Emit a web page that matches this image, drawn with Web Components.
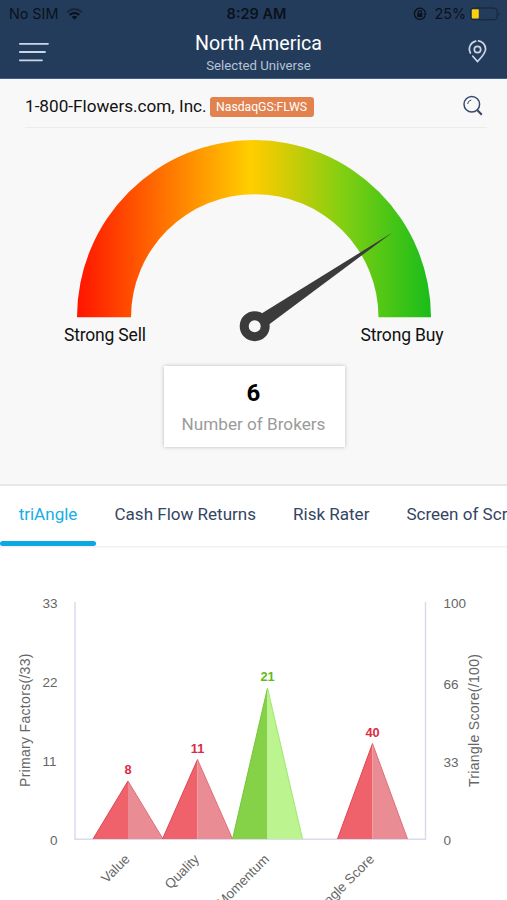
<!DOCTYPE html>
<html lang="en">
<head>
<meta charset="utf-8">
<title>North America</title>
<style>
html,body{margin:0;height:900px;overflow:hidden;background:#fff}
body{font-family:Roboto,"Liberation Sans",sans-serif}
</style>
</head>
<body>
<broker-app></broker-app>
<script>
const define = (name, html) => {
  const t = document.createElement('template');
  t.innerHTML = html;
  customElements.define(name, class extends HTMLElement {
    constructor() {
      super();
      this.attachShadow({mode: 'open'}).append(t.content.cloneNode(true));
    }
  });
};

define('status-bar', `<style>
:host{display:grid;grid-template-columns:1fr auto 1fr;align-items:center;height:27px;padding:0 6px 0 9px;box-sizing:border-box;background:#243c5b;color:#0b111b;font:14.300px/27px Inter,sans-serif}
.l,.r{display:flex;align-items:center}.r{justify-content:flex-end}
.l svg{margin-left:8px}.r span{margin:0 4px 0 8px}b{font-weight:600;font-size:14.500px;padding-left:3px}
svg{display:block}
</style>
<div class="l"><span>No SIM</span>
<svg width="17" height="12" viewBox="0 0 17 12" fill="none" stroke="#0b111b" stroke-width="2"><path d="M1 4.200Q8.500-2 16 4.200" opacity=".5"/><path d="M3.700 6.900Q8.500 3 13.300 6.900"/><path d="M5.700 8.800Q8.500 6.500 11.300 8.800L8.500 11.700Z" fill="#0b111b" stroke="none"/></svg></div>
<b>8:29 AM</b>
<div class="r"><svg width="14" height="14" viewBox="0 0 14 14" fill="none" stroke="#0b111b" stroke-width="1.300"><path d="M12.300 8.500A5.600 5.600 0 1 1 12.400 5.500"/><path d="M10.300 6.200h3.600l-1.800 2.600z" fill="#0b111b" stroke="none"/><rect x="4.300" y="6.300" width="5" height="3.700" fill="#0b111b" stroke="none"/><path d="M5.200 6.500V5.200a1.600 1.600 0 0 1 3.200 0v1.300"/></svg>
<span>25%</span>
<svg width="31" height="14" viewBox="0 0 31 14"><rect x=".7" y="1" width="26.500" height="11.800" rx="3" fill="none" stroke="#172334"/><rect x="1.800" y="2.300" width="7" height="9.300" rx="1" fill="#fbd00f"/><path d="M28.700 4.900q2.200 2 0 4z" fill="#172334"/></svg></div>`);

define('nav-bar', `<style>
:host{display:grid;grid-template-columns:60px 1fr 60px;height:52px;background:#243c5b;color:#fff;box-sizing:border-box;border-bottom:1px solid #3f5f86}
svg{display:block}
.t{text-align:center;padding:4px 0 0 10px}
h1{font-weight:400;font-size:19.600px;line-height:25px;margin:0;white-space:nowrap}
p{margin:0;font-size:13.200px;line-height:20px;color:#b5c3d6}
.m{padding:15px 0 0 18.500px}.p{padding:13px 0 0 20px}
</style>
<div class="m"><svg width="30" height="20" fill="none" stroke="#cbd7e6" stroke-width="1.800" stroke-linecap="round"><path d="M.8 1.800H29M.8 10H26M.8 18.300H23"/></svg></div>
<div class="t"><h1><slot name="title"></slot></h1><p><slot></slot></p></div>
<div class="p"><svg width="22" height="24" viewBox="0 0 22 24" fill="none" stroke="#cbd7e6" stroke-width="1.700" stroke-linecap="round"><path d="M5.800 16.200L10.500 21.600C14 17.800 18.600 13.300 18.600 9A8.200 8.200 0 0 0 11.500 .9M8.700 1.100A8.200 8.200 0 0 0 3.400 13"/><circle cx="10.500" cy="9.500" r="3.200"/></svg></div>`);

define('company-row', `<style>
:host{display:flex;align-items:center;height:49px;margin:0 20px 0 25px;padding-top:6px;box-sizing:border-box;border-bottom:1px solid #ececec;color:#111}
.n{font-size:17.150px;white-space:nowrap}
.b{margin:2px 0 0 3px;height:20px;line-height:21px;width:104px;text-align:center;background:#e1824f;color:#fff;border-radius:3px;font-size:12.200px}
svg{margin-left:auto;margin-right:3px}
</style>
<span class="n"><slot></slot></span><span class="b"><slot name="ticker"></slot></span>
<svg width="22" height="22" viewBox="0 0 22 22" fill="none" stroke="#394a6a" stroke-width="1.500"><circle cx="9.800" cy="9.300" r="7.800"/><path d="M5.600 9A4.500 4.500 0 0 1 9.300 5" stroke-width="1"/><path d="M15.400 15.200L19.800 19.700" stroke-width="2.200"/></svg>`);

define('rating-gauge', `<style>
:host{display:block;height:222px}svg{display:block}text{font:17.500px Roboto,sans-serif;fill:#111}
</style>
<svg width="507" height="222" viewBox="0 128 507 222">
<defs><linearGradient id="g" gradientUnits="userSpaceOnUse" x1="77" x2="431" y1="0" y2="0"><stop offset="0" stop-color="#ff1400"/><stop offset=".25" stop-color="#ff7400"/><stop offset=".49" stop-color="#ffce00"/><stop offset=".54" stop-color="#eccb02"/><stop offset=".75" stop-color="#82cf12"/><stop offset="1" stop-color="#1abd1a"/></linearGradient></defs>
<path d="M77 317.300A177 177.300 0 0 1 431 317.300H378.500A123.750 123.100 0 0 0 131 317.300Z" fill="url(#g)"/>
<path d="M392.500 232.500L260 314.500L269 324.500Z" fill="#3b3b3b"/>
<circle cx="254.700" cy="326.200" r="10.500" fill="#f8f8f8" stroke="#3b3b3b" stroke-width="9"/>
<text x="64" y="341" textLength="82">Strong Sell</text><text x="360.500" y="341" textLength="83">Strong Buy</text>
</svg>`);

define('broker-count', `<style>
:host{display:block;width:181px;height:81px;margin:16px auto 0 164px;background:#fff;box-shadow:0 0 4px rgba(0,0,0,.25);text-align:center;box-sizing:border-box;padding:12px 2px 0 0}
b{display:block;font-size:24px;line-height:31px;color:#000}
span{display:block;font-size:17.150px;line-height:31px;color:#9b9b9b;white-space:nowrap}
</style><b><slot name="count"></slot></b><span><slot></slot></span>`);

define('tab-item', `<style>
:host{display:block;position:relative;flex:none;white-space:nowrap;font-size:17.050px;line-height:56px;color:#344563;margin-right:37px}
:host([active]){width:96px;margin-right:18.500px;text-align:center;color:#16aee5}
:host([active])::after{content:"";position:absolute;left:0;right:0;top:55px;height:5px;border-radius:3px;background:#0ba8e2}
</style><slot></slot>`);

define('tab-strip', `<style>
:host{display:flex;height:64px;border-top:2px solid #e7e7e7;box-sizing:border-box;overflow:hidden;background:linear-gradient(#f1f1f1,#f1f1f1) 0 60px/100% 1.500px no-repeat #fff}
</style><slot></slot>`);

define('factor-chart', `<style>
:host{display:block;height:352px;overflow:hidden}svg{display:block}
text{font:13.500px "Liberation Sans",Arial,sans-serif;fill:#666}
.v{font-weight:700;font-size:12.800px;text-anchor:middle;fill:#dc2b43}.e{text-anchor:end}.t{font-size:14px}
</style>
<svg width="507" height="352" viewBox="0 548 507 352">
<path d="M75 602V839.300H425.500V602" fill="none" stroke="#d9daf0" stroke-width="1.500"/>
<g id="bars"></g>
<text x="57.500" y="608" class="e">33</text><text x="57.500" y="686.500" class="e">22</text><text x="56.500" y="766" class="e">11</text><text x="57.500" y="845" class="e">0</text>
<text x="443.500" y="608">100</text><text x="443.500" y="689">66</text><text x="443.500" y="767">33</text><text x="443.500" y="845">0</text>
<text class="t" transform="translate(30 787) rotate(-90)" textLength="133.500">Primary Factors(/33)</text>
<text class="t" transform="translate(478.500 787) rotate(-90)" textLength="133">Triangle Score(/100)</text>
</svg>`);

define('broker-app', `<style>
:host{display:flex;flex-direction:column;width:507px;height:900px;overflow:hidden;background:#fff}
section{height:404.500px;background:#f8f8f8}
</style>
<status-bar></status-bar>
<nav-bar><span slot="title">North America</span>Selected Universe</nav-bar>
<section>
<company-row>1-800-Flowers.com, Inc.<span slot="ticker">NasdaqGS:FLWS</span></company-row>
<rating-gauge></rating-gauge>
<broker-count><span slot="count">6</span>Number of Brokers</broker-count>
</section>
<tab-strip><tab-item active>triAngle</tab-item><tab-item>Cash Flow Returns</tab-item><tab-item>Risk Rater</tab-item><tab-item>Screen of Screens</tab-item></tab-strip>
<factor-chart></factor-chart>`);

/* Each factor: apex x, apex y, value, category, green flag */
const factors = [[128,781,8,'Value'],[197.500,759.500,11,'Quality'],[267.500,688,21,'Momentum',1],[372.500,743.500,40,'Triangle Score']];
const chart = document.querySelector('broker-app').shadowRoot.querySelector('factor-chart').shadowRoot;
chart.querySelector('#bars').innerHTML = factors.map(([x,y,v,name,green]) => `
<path d="M${x} ${y}L${x-35} 839H${x}Z" fill="${green?'#85d147':'#f0626b'}"/>
<path d="M${x} ${y}L${x+35} 839H${x}Z" fill="${green?'#bcf48f':'#e98c94'}"/>
<path d="M${x-35} 839L${x} ${y}" stroke="${green?'#77c63a':'#df4552'}" stroke-width="1"/><path d="M${x} ${y}L${x+35} 839" stroke="${green?'#9de86c':'#e0707b'}" stroke-width="1"/>
<text class="v" x="${x}" y="${y-7}"${green?' style="fill:#5fbb17"':''}>${v}</text>
<text class="e" transform="translate(${x+2.500} 860) rotate(-45)">${name}</text>`).join('');
</script>
</body>
</html>
